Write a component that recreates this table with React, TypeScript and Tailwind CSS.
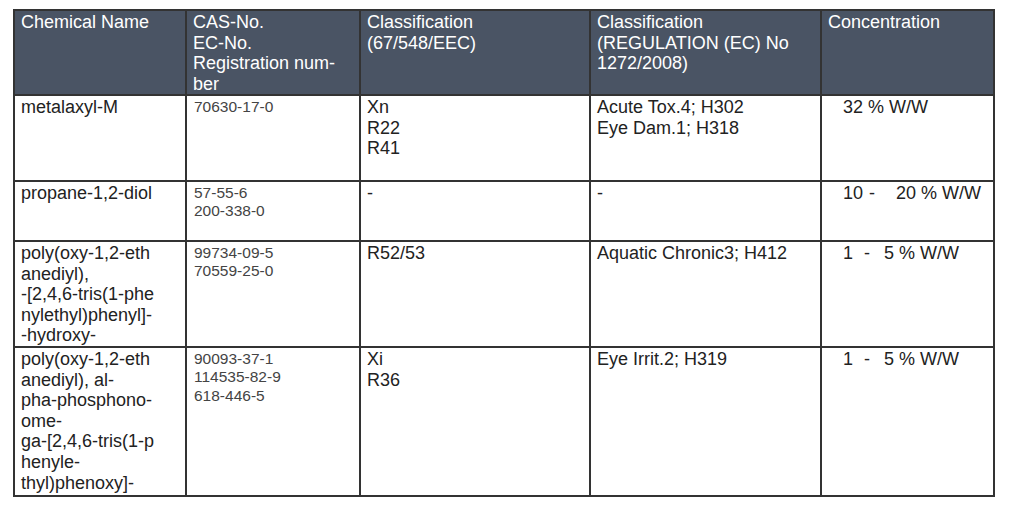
import React from "react";

const F = { fontFamily: '"Liberation Sans", Arial, sans-serif' };

function Lines({ lines }: { lines: string[] }) {
  return (
    <>
      {lines.map((l, i) => (
        <div key={i} className="whitespace-pre">
          {l}
        </div>
      ))}
    </>
  );
}

function Head({ lines }: { lines: string[] }) {
  return (
    <div className="bg-[#4a5464] text-white text-[18px] leading-[20.6px] pl-[6px] pt-[1px]">
      <Lines lines={lines} />
    </div>
  );
}

function Cell({ lines }: { lines: string[] }) {
  return (
    <div className="bg-white text-[#222] text-[18px] leading-[20.6px] pl-[6px] pt-[1px]">
      <Lines lines={lines} />
    </div>
  );
}

function Cas({ lines }: { lines: string[] }) {
  return (
    <div className="bg-white text-[#444] text-[15.5px] leading-[18.3px] pl-[7px] pt-[2px]">
      <Lines lines={lines} />
    </div>
  );
}

function Conc({ lo, dashW, loW, hi }: { lo?: string; loW?: string; dashW?: string; hi: string }) {
  return (
    <div className="bg-white text-[#222] text-[18px] leading-[20.6px] pl-[21px] pt-[1px] whitespace-pre">
      {lo ? (
        <>
          <span className={loW}>{lo}</span>
          <span className={dashW}>-</span>
          <span>{hi}</span>
        </>
      ) : (
        <span>{hi}</span>
      )}
    </div>
  );
}

export default function App() {
  return (
    <div className="min-h-[511px] w-[1012px] bg-white pt-[9px] pl-[13px]" style={F}>
      <div className="grid w-[982px] grid-cols-[170px_172px_228px_229px_171px] grid-rows-[83px_84px_58px_104px_147px] gap-[2px] bg-[#333] p-[2px]">
        <Head lines={["Chemical Name"]} />
        <Head lines={["CAS-No.", "EC-No.", "Registration num-", "ber"]} />
        <Head lines={["Classification", "(67/548/EEC)"]} />
        <Head lines={["Classification", "(REGULATION (EC) No", "1272/2008)"]} />
        <Head lines={["Concentration"]} />

        <Cell lines={["metalaxyl-M"]} />
        <Cas lines={["70630-17-0"]} />
        <Cell lines={["Xn", "R22", "R41"]} />
        <Cell lines={["Acute Tox.4; H302", "Eye Dam.1; H318"]} />
        <Conc hi="32 % W/W" />

        <Cell lines={["propane-1,2-diol"]} />
        <Cas lines={["57-55-6", "200-338-0"]} />
        <Cell lines={["-"]} />
        <Cell lines={["-"]} />
        <Conc lo="10" loW="inline-block w-[26px]" dashW="inline-block w-[27px]" hi="20 % W/W" />

        <Cell
          lines={[
            "poly(oxy-1,2-eth",
            "anediyl),",
            "-[2,4,6-tris(1-phe",
            "nylethyl)phenyl]-",
            "-hydroxy-",
          ]}
        />
        <Cas lines={["99734-09-5", "70559-25-0"]} />
        <Cell lines={["R52/53"]} />
        <Cell lines={["Aquatic Chronic3; H412"]} />
        <Conc lo="1" loW="inline-block w-[21px]" dashW="inline-block w-[20px]" hi="5 % W/W" />

        <Cell
          lines={[
            "poly(oxy-1,2-eth",
            "anediyl), al-",
            "pha-phosphono-",
            "ome-",
            "ga-[2,4,6-tris(1-p",
            "henyle-",
            "thyl)phenoxy]-",
          ]}
        />
        <Cas lines={["90093-37-1", "114535-82-9", "618-446-5"]} />
        <Cell lines={["Xi", "R36"]} />
        <Cell lines={["Eye Irrit.2; H319"]} />
        <Conc lo="1" loW="inline-block w-[21px]" dashW="inline-block w-[20px]" hi="5 % W/W" />
      </div>
    </div>
  );
}
